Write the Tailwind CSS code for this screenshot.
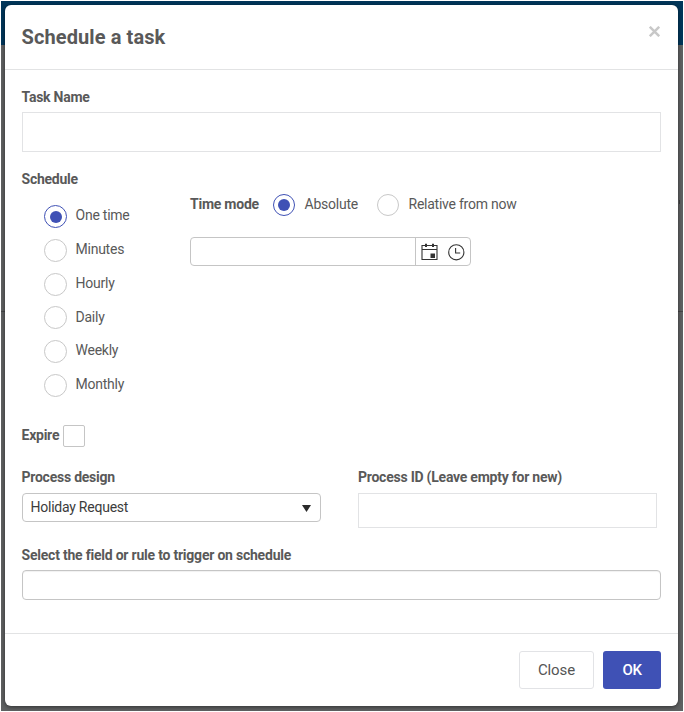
<!DOCTYPE html>
<html lang="en">
<head>
<meta charset="utf-8">
<title>Schedule a task</title>
<script src="https://cdn.jsdelivr.net/npm/@tailwindcss/browser@4"></script>
</head>
<body class="h-[712px] w-[684px] overflow-hidden bg-white p-px font-['Roboto',sans-serif] text-sm leading-5 text-[#595959]">
<div class="relative h-[710px] w-[682px] overflow-hidden bg-[#5f6162] p-1">
  <!-- Dimmed page behind the dialog -->
  <div class="absolute inset-x-0 top-0 h-11 bg-[#00365a]"></div>
  <div class="absolute inset-x-0 top-[310px] h-px bg-[#454647]"></div>
  <div class="absolute right-[3px] top-[199px] h-1 w-px bg-[#3c3d3e]"></div>

  <main class="relative flex h-[701px] w-[673px] flex-col rounded-md bg-white tracking-[-0.24px] shadow-[0_1px_4px_rgba(0,0,0,0.5)]">
    <header class="flex h-[65px] items-start justify-between border-b border-[#e2e3e4] pl-[16.5px] pr-[18px]">
      <h1 class="pt-[18px] text-xl leading-7 font-bold tracking-[0.1px]"><span>Schedule a task</span></h1>
      <button class="mt-[21px] block" aria-label="Close dialog">
        <svg class="block" width="11" height="11" viewBox="0 0 11 11" fill="none" stroke="#c8c8c8" stroke-width="2.5"><path d="M.8.8l9.4 9.4M10.2.8L.8 10.2"/></svg>
      </button>
    </header>

    <section class="flex h-[563px] flex-col px-[17px]">
      <label class="-ml-[0.5px] mt-[17px] block font-bold"><span>Task Name</span></label>
      <input class="mt-[5px] block h-10 w-full border border-[#e2e3e5]">
      <div class="-ml-[0.5px] mt-[17px] font-bold"><span>Schedule</span></div>

      <div class="mt-[14px] flex h-[206px]">
        <div class="flex w-[168px] flex-col gap-[10.84px] pl-[22px] pt-[2px]">
          <label class="flex h-[23px] gap-[9px]"><span class="flex size-[23px] items-center justify-center rounded-full border border-[#3f51b5]"><span class="size-3 rounded-full bg-[#3f51b5]"></span></span><span class="-ml-[0.5px] leading-[21px]">One time</span></label>
          <label class="flex h-[23px] gap-[9px]"><span class="size-[23px] rounded-full border border-[#c8c8c8]"></span><span class="-ml-[0.5px] leading-[21px]">Minutes</span></label>
          <label class="flex h-[23px] gap-[9px]"><span class="size-[23px] rounded-full border border-[#c8c8c8]"></span><span class="-ml-[0.5px] leading-[21px]">Hourly</span></label>
          <label class="flex h-[23px] gap-[9px]"><span class="size-[23px] rounded-full border border-[#c8c8c8]"></span><span class="-ml-[0.5px] pt-px leading-[21px]">Daily</span></label>
          <label class="flex h-[23px] gap-[9px]"><span class="size-[23px] rounded-full border border-[#c8c8c8]"></span><span class="-ml-[0.5px] leading-[21px]">Weekly</span></label>
          <label class="flex h-[23px] gap-[9px]"><span class="size-[23px] rounded-full border border-[#c8c8c8]"></span><span class="-ml-[0.5px] leading-[21px]">Monthly</span></label>
        </div>
        <div class="-mt-[9px] w-[400px]">
          <div class="flex h-[23px]">
            <span class="w-[83px] font-bold"><span>Time mode</span></span>
            <label class="flex w-[104px] gap-[9px]"><span class="flex size-[22px] items-center justify-center rounded-full border border-[#3f51b5]"><span class="size-3 rounded-full bg-[#3f51b5]"></span></span><span class="ml-[0.5px]">Absolute</span></label>
            <label class="flex gap-[9px]"><span class="size-[22px] rounded-full border border-[#c8c8c8]"></span><span class="ml-[0.5px]">Relative from now</span></label>
          </div>
          <div class="mt-5 flex h-[29px] w-[281px] rounded border border-[#c5c5c5]">
            <div class="w-[225px] border-r border-[#c5c5c5]"></div>
            <div class="flex flex-1 gap-[11px] pl-[5px] pt-[5px]">
              <svg class="block" width="17" height="18" viewBox="0 0 17 18" fill="none" stroke="#333" stroke-width="1.1"><path d="M1 2.5h15v14H1zM1 6.5h15"/><path d="M5 .7v3.4M12 .7v3.4" stroke-width="2"/><path d="M9.5 10.5h4.5v4.5H9.500z" fill="#333" stroke="none"/></svg>
              <svg class="-ml-px mt-px block" width="17" height="17" viewBox="0 0 17 17" fill="none" stroke="#333" stroke-width="1.1"><circle cx="8.3" cy="8.3" r="7.6"/><path d="M7.6 4v5h4.6"/></svg>
            </div>
          </div>
        </div>
      </div>

      <div class="-ml-[0.5px] mt-4 flex h-[22px] gap-1 font-bold"><span class="w-[37.5px]">Expire</span><span class="size-[22px] rounded-xs border border-[#c5c5c5]"></span></div>

      <div class="mt-5 flex">
        <div class="w-[336px]">
          <div class="-ml-[0.5px] font-bold"><span>Process design</span></div>
          <div class="mt-[6px] flex h-[29px] w-[299px] items-center justify-between rounded border border-[#c5c5c5] pb-px pl-[7.5px] pr-[9px] text-[#3c3c3c]"><span>Holiday Request</span><svg class="mt-[2px] block" width="9" height="7" viewBox="0 0 9 7"><path d="M0 0h9L4.5 7z" fill="#2b2b2b"/></svg></div>
        </div>
        <div>
          <div class="font-bold"><span>Process ID (Leave empty for new)</span></div>
          <input class="mt-[6px] block h-[35px] w-[299px] border border-[#e2e3e5]">
        </div>
      </div>

      <div class="-ml-[0.5px] mt-[17px] font-bold tracking-[-0.22px]"><span>Select the field or rule to trigger on schedule</span></div>
      <div class="mt-[5px] h-[30px] w-full shrink-0 rounded border border-[#c5c5c5] shadow-[inset_0_1px_1px_rgba(0,0,0,0.06)]"></div>
    </section>

    <footer class="flex flex-1 justify-end gap-[9px] border-t border-[#e2e3e4] pr-[17px] pt-[17px]">
      <button class="flex h-[38px] w-[75px] items-center justify-center rounded-[3px] border border-[#e2e3e6] text-[15px] leading-5 tracking-[-0.1px] text-[#555]">Close</button>
      <button class="flex h-[38px] w-[58px] items-center justify-center rounded-[3px] bg-[#3f51b5] text-[15px] leading-5 font-medium tracking-[-0.3px] text-white">OK</button>
    </footer>
  </main>
</div>
</body>
</html>
